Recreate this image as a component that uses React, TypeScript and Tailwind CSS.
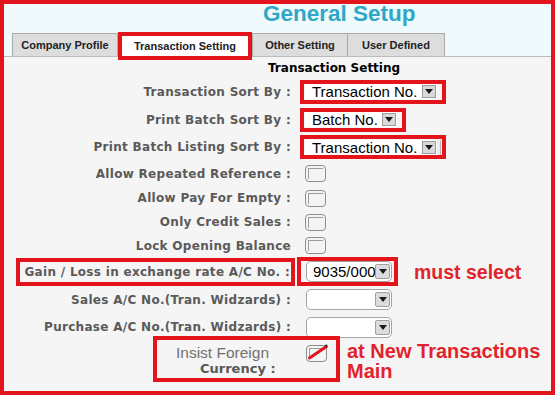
import React from "react"

const red = "border-[#e3141c]"
const labelCls =
  "whitespace-nowrap font-['DejaVu_Sans',Verdana,sans-serif] text-[12px] tracking-[0.3px] font-bold text-[#5a5a5a]"
const arial = "font-['Liberation_Sans',Arial,sans-serif]"

function Caret() {
  return (
    <svg width="8" height="5" viewBox="0 0 8 5">
      <path d="M0 0h8L4 5z" fill="#1a1a1a" />
    </svg>
  )
}

function FlatSelect({ value, width }: { value: string; width: string }) {
  return (
    <div className={`flex h-[15px] items-center bg-white ${width}`}>
      <span className={`flex-1 whitespace-nowrap pl-[7px] text-[15px] leading-[15px] text-black ${arial}`}>{value}</span>
      <div className="mr-[1px] flex h-[13px] w-[14px] items-center justify-center border border-[#9b9b9b] bg-[#d9d9d9]">
        <Caret />
      </div>
    </div>
  )
}

function RoundSelect({ value = "" }: { value?: string }) {
  return (
    <div className="flex h-[21px] w-[86px] items-center rounded-[5px] border border-[#a3a3a3] bg-white pr-[1px]">
      <span className={`flex-1 overflow-hidden whitespace-nowrap pl-[6px] text-[15px] leading-[17px] text-black ${arial}`}>
        {value}
      </span>
      <div className="flex h-[15px] w-[15px] shrink-0 items-center justify-center rounded-[2px] border border-[#a0a0a0] bg-[#dcdcdc]">
        <Caret />
      </div>
    </div>
  )
}

function Check({ marked = false }: { marked?: boolean }) {
  return (
    <div className="relative h-[17px] w-[21px] rounded-[4px] border border-[#8d8d8d] bg-[#f4f4f4] p-[2px]">
      <div className="h-full w-full border-l border-t border-[#9c9c9c]" />
      {marked && (
        <svg className="absolute left-0 top-0 overflow-visible" width="21" height="15" viewBox="0 0 21 15">
          <path d="M2.5 12 L19.5 0.5" stroke="#e3141c" strokeWidth="3" strokeLinecap="round" />
          <path d="M17.5 0.5 L20 -1" stroke="#333" strokeWidth="1.5" />
        </svg>
      )}
    </div>
  )
}

function Row({ h, label, children }: { h: string; label: React.ReactNode; children?: React.ReactNode }) {
  return (
    <div className={`flex items-center ${h}`}>
      <div className="flex w-[287px] shrink-0 justify-end">{label}</div>
      <div className="ml-[9px] flex items-center">{children}</div>
    </div>
  )
}

export default function App() {
  return (
    <div className="h-[398px] w-[557px] bg-white">
      <div className={`flex h-[395px] w-[555px] flex-col border-4 ${red} bg-[#f5f5f5]`}>
        {/* header + tabs */}
        <div className="bg-[#eefafc]">
          <div className={`h-[29px] pl-[259px] text-[22.5px] font-bold leading-[20px] text-[#2fa7c6] ${arial}`}>
            General Setup
          </div>
          <div className={`flex h-[24px] items-end border-b border-[#bcbcbc] pl-[8px] text-[11px] font-bold text-[#222] ${arial}`}>
            <div className="flex h-[23px] w-[106px] items-center justify-center border border-b-0 border-[#ababab] bg-[#dddddd]">
              Company Profile
            </div>
            <div className={`relative z-10 -mb-[4px] flex h-[28px] w-[134px] items-center justify-center border-4 ${red} bg-white`}>
              Transaction Setting
            </div>
            <div className="flex h-[23px] w-[96px] items-center justify-center border border-b-0 border-[#ababab] bg-[#dddddd]">
              Other Setting
            </div>
            <div className="flex h-[23px] w-[97px] items-center justify-center border border-b-0 border-l-0 border-[#ababab] bg-[#dddddd]">
              User Defined
            </div>
          </div>
        </div>

        {/* form */}
        <div className="flex flex-col">
          <div className="h-[20px] pl-[264px] pt-[4px] font-['DejaVu_Sans',Verdana,sans-serif] text-[12px] font-bold leading-[14px] text-black">
            Transaction Setting
          </div>

          <Row h="h-[29px]" label={<span className={labelCls}>Transaction Sort By :</span>}>
            <div className={`flex h-[24px] items-center border-4 ${red} pl-[1px] pr-[5px]`}>
              <FlatSelect value="Transaction No." width="w-[132px]" />
            </div>
          </Row>
          <Row h="h-[27px]" label={<span className={labelCls}>Print Batch Sort By :</span>}>
            <div className={`flex h-[24px] items-center border-4 ${red} pl-[1px] pr-[5px]`}>
              <FlatSelect value="Batch No." width="w-[92px]" />
            </div>
          </Row>
          <Row h="h-[28px]" label={<span className={labelCls}>Print Batch Listing Sort By :</span>}>
            <div className={`flex h-[24px] items-center border-4 ${red} pl-[1px] pr-[1px]`}>
              <FlatSelect value="Transaction No." width="w-[132px]" />
              <div className="h-[15px] w-[4px] border-r border-[#b5b5b5] bg-[#ececec]" />
            </div>
          </Row>

          <Row h="h-[25px]" label={<span className={labelCls}>Allow Repeated Reference :</span>}>
            <div className="ml-[5px]"><Check /></div>
          </Row>
          <Row h="h-[24px]" label={<span className={labelCls}>Allow Pay For Empty :</span>}>
            <div className="ml-[5px]"><Check /></div>
          </Row>
          <Row h="h-[24px]" label={<span className={labelCls}>Only Credit Sales :</span>}>
            <div className="ml-[5px]"><Check /></div>
          </Row>
          <Row h="h-[23px]" label={<span className={labelCls}>Lock Opening Balance</span>}>
            <div className="ml-[5px]"><Check /></div>
          </Row>

          <Row
            h="h-[29px]"
            label={
              <div className={`-mr-[4px] flex h-[28px] items-center border-4 ${red} pl-[4px] pr-[1px]`}>
                <span className={labelCls}>Gain / Loss in exchange rate A/C No. :</span>
              </div>
            }
          >
            <div className={`-ml-[3px] flex h-[29px] items-center border-4 ${red} pl-[5px] pr-[2px]`}>
              <RoundSelect value="9035/000" />
            </div>
            <span className={`ml-[16px] whitespace-nowrap text-[19.5px] font-bold leading-[20px] text-[#e3232b] ${arial}`}>
              must select
            </span>
          </Row>
          <Row h="h-[27px]" label={<span className={labelCls}>Sales A/C No.(Tran. Widzards) :</span>}>
            <div className="ml-[6px]"><RoundSelect /></div>
          </Row>
          <Row h="h-[28px]" label={<span className={labelCls}>Purchase A/C No.(Tran. Widzards) :</span>}>
            <div className="ml-[6px]"><RoundSelect /></div>
          </Row>

          <div className="-mt-[5px] flex items-start pl-[149px]">
            <div className={`flex h-[46px] w-[187px] border-4 ${red}`}>
              <div className="flex w-[149px] flex-col pt-[4px]">
                <span className={`pl-[19px] text-[15.5px] leading-[17px] text-[#707070] ${arial}`}>Insist Foreign</span>
                <span className="pl-[43px] font-['DejaVu_Sans',Verdana,sans-serif] text-[13px] font-bold leading-[15px] text-[#585858]">
                  Currency :
                </span>
              </div>
              <div className="mt-[5px]"><Check marked /></div>
            </div>
            <div className={`ml-[7px] mt-[5px] flex flex-col text-[20px] font-bold leading-[20px] text-[#e3232b] ${arial}`}>
              <span>at New Transactions</span>
              <span>Main</span>
            </div>
          </div>
        </div>
      </div>
    </div>
  )
}
